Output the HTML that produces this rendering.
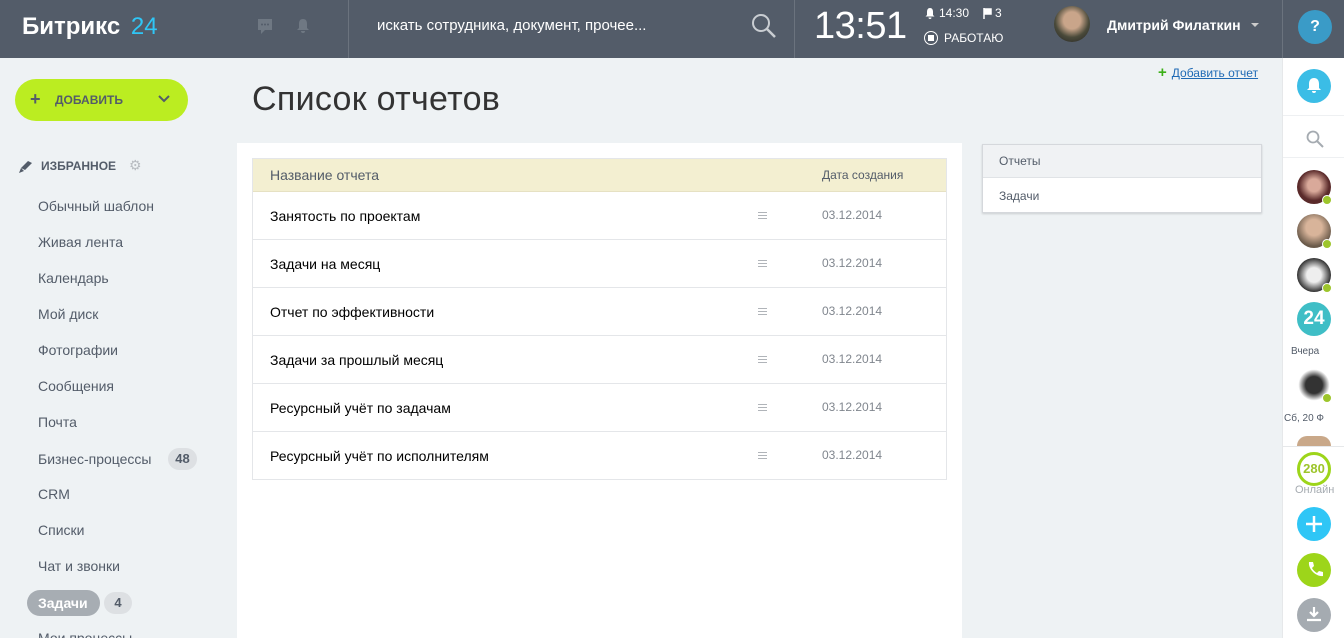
<!DOCTYPE html>
<html><head><meta charset="utf-8"><style>
*{margin:0;padding:0;box-sizing:border-box}
html{overflow:hidden}
body{width:1344px;height:638px;overflow:hidden;background:#eef2f4;font-family:"Liberation Sans",sans-serif;position:relative}
.hdr{position:absolute;left:0;top:0;width:1344px;height:58px;background:#535c69}
.abs{position:absolute}
.vs{position:absolute;top:0;height:58px;width:1px;background:#6b737e}
.menu div{position:absolute;left:38px;font-size:14px;color:#535c69}
.row{position:absolute;left:253px;width:693px;height:48px;border-bottom:1px solid #e4e6e9;font-size:14px;color:#000}
.row .n{position:absolute;left:17px;top:16px}
.row .d{position:absolute;left:569px;top:16px;font-size:12px;color:#80868e}
.row .m{position:absolute;left:505px;top:20px;width:9px;height:7px;border-top:1px solid #b0b4b9;border-bottom:1px solid #b0b4b9}
.row .m:after{content:"";position:absolute;left:0;top:2px;width:9px;border-top:1px solid #b0b4b9}
.av{position:absolute;left:1297px;width:34px;height:34px;border-radius:50%}
.dot{position:absolute;width:10px;height:10px;border-radius:50%;background:#9dc52b;border:1px solid #fff}
</style></head><body>
<div class="hdr"></div>
<div class="abs" style="left:22px;top:13px;font-size:24px;font-weight:bold;color:#fff">Битрикс <span style="color:#2fc6f6;font-weight:normal;margin-left:4px">24</span></div>
<svg class="abs" style="left:257px;top:18px" width="16" height="17"><rect x="1" y="1" width="14" height="11" fill="#6f7883"/><path d="M4 12v4l4-4z" fill="#6f7883"/><circle cx="5" cy="6.5" r="1" fill="#535c69"/><circle cx="8" cy="6.5" r="1" fill="#535c69"/><circle cx="11" cy="6.5" r="1" fill="#535c69"/></svg>
<svg class="abs" style="left:296px;top:18px" width="14" height="16"><path d="M7 1c-3 0-4 2-4 5v4l-2 2h12l-2-2V6c0-3-1-5-4-5z M5 13h4a2 2 0 0 1-4 0z" fill="#6f7883"/></svg>
<div class="vs" style="left:348px"></div>
<div class="abs" style="left:377px;top:17px;font-size:15px;color:#fff">искать сотрудника, документ, прочее...</div>
<svg class="abs" style="left:751px;top:13px" width="26" height="26"><circle cx="10" cy="10" r="8" fill="none" stroke="#c9cdd2" stroke-width="2"/><path d="M16 16l8 8" stroke="#c9cdd2" stroke-width="2.5"/></svg>
<div class="vs" style="left:794px"></div>
<div class="abs" style="left:814px;top:5px;font-size:38px;font-weight:300;color:#fff;letter-spacing:-0.5px">13:51</div>
<svg class="abs" style="left:925px;top:8px" width="10" height="11"><path d="M5 0c-2 0-3 1.5-3 4v3l-1.5 1.5h9L8 7V4c0-2.5-1-4-3-4z M3.5 9.5h3a1.5 1.5 0 0 1-3 0z" fill="#fff"/></svg>
<div class="abs" style="left:939px;top:6px;font-size:12px;color:#fff">14:30</div>
<svg class="abs" style="left:983px;top:8px" width="9" height="11"><path d="M1 0v11M1 1h7v5H1" fill="#fff" stroke="#fff" stroke-width="1.5"/></svg>
<div class="abs" style="left:995px;top:6px;font-size:12px;color:#fff">3</div>
<div class="abs" style="left:924px;top:31px;width:14px;height:14px;border:1px solid #fff;border-radius:50%"><div style="position:absolute;left:3px;top:3px;width:6px;height:6px;background:#fff"></div></div>
<div class="abs" style="left:944px;top:31px;font-size:12px;color:#fff">РАБОТАЮ</div>
<div class="abs" style="left:1054px;top:6px;width:36px;height:36px;border-radius:50%;background:radial-gradient(circle at 50% 40%,#c9a58a 0 30%,#4a4a3a 60%,#222 100%)"></div>
<div class="abs" style="left:1107px;top:17px;font-size:14px;font-weight:bold;color:#fff">Дмитрий Филаткин</div>
<div class="abs" style="left:1251px;top:23px;border:4px solid transparent;border-top-color:#ccc"></div>
<div class="vs" style="left:1282px;background:#6b737e"></div>
<div class="abs" style="left:1298px;top:10px;width:34px;height:34px;border-radius:50%;background:#3a9bc7;color:#fff;font-weight:bold;font-size:16px;text-align:center;line-height:34px">?</div>

<div class="abs" style="left:15px;top:79px;width:173px;height:42px;border-radius:21px;background:#bbed21"></div>
<div class="abs" style="left:30px;top:89px;font-size:18px;font-weight:bold;color:#535c69">+</div>
<div class="abs" style="left:55px;top:93px;font-size:12px;font-weight:bold;color:#535c69">ДОБАВИТЬ</div>
<svg class="abs" style="left:158px;top:95px" width="12" height="8"><path d="M1 1l5 5 5-5" fill="none" stroke="#535c69" stroke-width="2"/></svg>
<div class="abs" style="left:252px;top:80px;font-size:34px;font-weight:300;color:#333;letter-spacing:0.3px">Список отчетов</div>
<div class="abs" style="left:1158px;top:64px;font-size:12px;color:#1f6ab5;text-decoration:underline"><span style="color:#3bb017;font-weight:bold;font-size:15px;text-decoration:none;display:inline-block;margin-right:5px">+</span>Добавить отчет</div>

<svg class="abs" style="left:18px;top:158px" width="16" height="16"><path d="M3 10l7-7 4 2-7 7z M3 10l-2 5 5-2z" fill="#535c69"/></svg>
<div class="abs" style="left:41px;top:159px;font-size:12px;font-weight:bold;color:#535c69">ИЗБРАННОЕ</div>
<div class="abs" style="left:129px;top:157px;font-size:14px;color:#b8bcc1">⚙</div>
<div class="menu">
<div style="top:198px">Обычный шаблон</div><div style="top:234px">Живая лента</div><div style="top:270px">Календарь</div><div style="top:306px">Мой диск</div><div style="top:342px">Фотографии</div><div style="top:378px">Сообщения</div><div style="top:414px">Почта</div><div style="top:451px">Бизнес-процессы</div><div style="top:486px">CRM</div><div style="top:522px">Списки</div><div style="top:558px">Чат и звонки</div><div style="top:630px">Мои процессы</div>
</div>
<div class="abs" style="left:168px;top:448px;width:29px;height:22px;border-radius:11px;background:#dde0e3;font-size:13px;font-weight:bold;color:#535c69;text-align:center;line-height:22px">48</div>
<div class="abs" style="left:27px;top:590px;width:73px;height:26px;border-radius:13px;background:#a7adb3;font-size:14px;font-weight:bold;color:#fff;padding-left:11px;line-height:26px">Задачи</div>
<div class="abs" style="left:104px;top:592px;width:28px;height:22px;border-radius:11px;background:#dde0e3;font-size:13px;font-weight:bold;color:#535c69;text-align:center;line-height:22px">4</div>

<div class="abs" style="left:237px;top:143px;width:725px;height:495px;background:#fff"></div>
<div class="abs" style="left:252px;top:158px;width:695px;height:322px;border:1px solid #e4e6e9"></div>
<div class="abs" style="left:253px;top:159px;width:693px;height:33px;background:#f3efd1;border-bottom:1px solid #e6e1c3"></div>
<div class="abs" style="left:270px;top:167px;font-size:14px;color:#535c69">Название отчета</div>
<div class="abs" style="left:822px;top:168px;font-size:12px;color:#535c69">Дата создания</div>
<div class="row" style="top:192px"><span class="n">Занятость по проектам</span><i class="m"></i><span class="d">03.12.2014</span></div>
<div class="row" style="top:240px"><span class="n">Задачи на месяц</span><i class="m"></i><span class="d">03.12.2014</span></div>
<div class="row" style="top:288px"><span class="n">Отчет по эффективности</span><i class="m"></i><span class="d">03.12.2014</span></div>
<div class="row" style="top:336px"><span class="n">Задачи за прошлый месяц</span><i class="m"></i><span class="d">03.12.2014</span></div>
<div class="row" style="top:384px"><span class="n">Ресурсный учёт по задачам</span><i class="m"></i><span class="d">03.12.2014</span></div>
<div class="row" style="top:432px;border-bottom:none"><span class="n">Ресурсный учёт по исполнителям</span><i class="m"></i><span class="d">03.12.2014</span></div>

<div class="abs" style="left:982px;top:144px;width:280px;height:69px;background:#fff;border:1px solid #d5d8dc;box-shadow:0 1px 2px rgba(0,0,0,.15)"></div>
<div class="abs" style="left:983px;top:145px;width:278px;height:33px;background:#f0f2f4;border-bottom:1px solid #e0e3e6"></div>
<div class="abs" style="left:999px;top:154px;font-size:12px;color:#535c69">Отчеты</div>
<div class="abs" style="left:999px;top:189px;font-size:12px;color:#535c69">Задачи</div>

<div class="abs" style="left:1282px;top:58px;width:62px;height:580px;background:#fff"></div>
<div class="abs" style="left:1282px;top:58px;width:1px;height:580px;background:#e6e8ea"></div>
<div class="abs" style="left:1297px;top:69px;width:34px;height:34px;border-radius:50%;background:#3bbde6"></div>
<svg class="abs" style="left:1306px;top:77px" width="16" height="18"><path d="M8 1c-3 0-5 2-5 6v4l-2 2h14l-2-2V7c0-4-2-6-5-6z M6 14h4a2 2 0 0 1-4 0z" fill="#fff"/></svg>
<div class="abs" style="left:1283px;top:115px;width:61px;height:1px;background:#eef0f2"></div>
<svg class="abs" style="left:1306px;top:130px" width="18" height="18"><circle cx="7" cy="7" r="5.5" fill="none" stroke="#a5abb1" stroke-width="1.8"/><path d="M11 11l6 6" stroke="#a5abb1" stroke-width="2"/></svg>
<div class="abs" style="left:1283px;top:157px;width:61px;height:1px;background:#eef0f2"></div>
<div class="av" style="top:170px;background:radial-gradient(circle at 50% 45%,#d9a99a 0 25%,#5a2a2a 60%)"></div><div class="dot" style="left:1322px;top:195px"></div>
<div class="av" style="top:214px;background:radial-gradient(circle at 50% 40%,#d8b49a 0 30%,#6a5a4a 70%)"></div><div class="dot" style="left:1322px;top:239px"></div>
<div class="av" style="top:258px;background:radial-gradient(circle at 50% 50%,#eee 0 30%,#333 70%)"></div><div class="dot" style="left:1322px;top:283px"></div>
<div class="av" style="top:302px;background:#3fbec6;color:#fff;font-weight:bold;font-size:19px;text-align:center;line-height:34px">24</div>
<div class="abs" style="left:1291px;top:346px;font-size:10px;color:#535c69">Вчера</div>
<div class="av" style="top:368px;background:radial-gradient(circle at 50% 50%,#333 0 35%,#fff 65%)"></div><div class="dot" style="left:1322px;top:393px"></div>
<div class="abs" style="left:1284px;top:413px;font-size:10px;color:#535c69;white-space:nowrap;width:44px;overflow:hidden">Сб, 20 Ф</div>
<div class="av" style="top:436px;height:10px;border-radius:17px 17px 0 0;background:#c9a889"></div>
<div class="abs" style="left:1283px;top:446px;width:61px;height:1px;background:#e6e8ea"></div>
<div class="abs" style="left:1297px;top:452px;width:34px;height:34px;border-radius:50%;border:3px solid #9dd51a;text-align:center;line-height:28px;font-size:13px;font-weight:bold;color:#9dc52b">280</div>
<div class="abs" style="left:1295px;top:484px;font-size:11px;color:#a5abb1">Онлайн</div>
<div class="av" style="top:507px;background:#2fc6f6"></div>
<svg class="abs" style="left:1304px;top:514px" width="20" height="20"><path d="M10 2v16M2 10h16" stroke="#fff" stroke-width="2.5"/></svg>
<div class="av" style="top:553px;background:#9dd51a"></div>
<svg class="abs" style="left:1306px;top:561px" width="17" height="18"><path d="M3 1l4 0 1 4-2 2c1 2 3 4 5 5l2-2 4 1v4c-7 1-15-7-14-14z" fill="#fff"/></svg>
<div class="av" style="top:598px;background:#a5abb1"></div>
<svg class="abs" style="left:1305px;top:605px" width="18" height="18"><path d="M9 2v9M5 7l4 4 4-4M2 15h14" stroke="#fff" stroke-width="2.2" fill="none"/></svg>
</body></html>
